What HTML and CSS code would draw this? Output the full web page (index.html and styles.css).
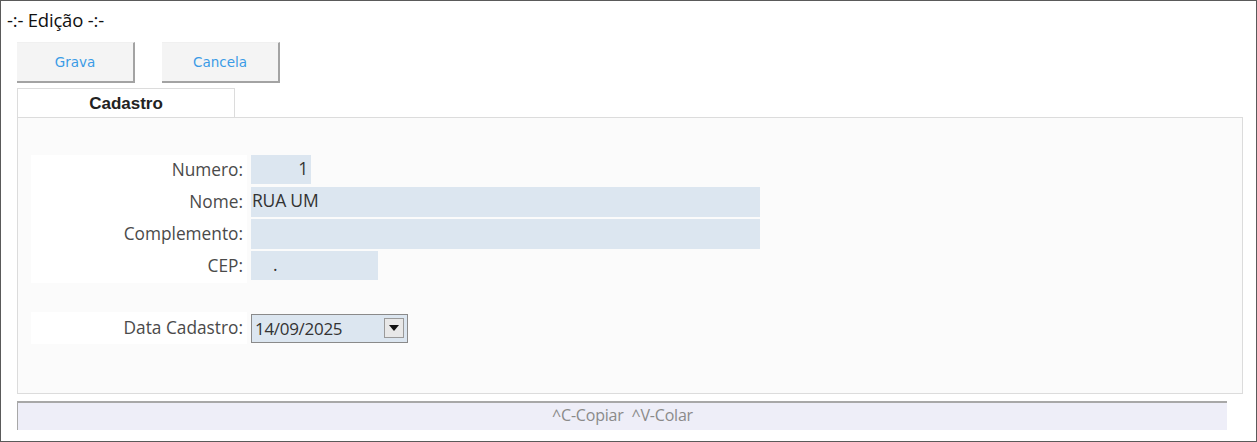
FILE: index.html
```html
<!DOCTYPE html>
<html lang="pt">
<head>
<meta charset="utf-8">
<title>Edição</title>
<link rel="stylesheet" href="styles.css">
</head>
<body>
<div class="window">
  <div class="title">-:- Edição -:-</div>
  <div class="toolbar">
    <button class="btn">Grava</button>
    <button class="btn">Cancela</button>
  </div>
  <div class="tabs">
    <div class="tab">Cadastro</div>
  </div>
  <div class="panel">
    <div class="row">
      <div class="label">Numero:</div>
      <div class="field f-num">1</div>
    </div>
    <div class="row">
      <div class="label">Nome:</div>
      <div class="field f-wide">RUA UM</div>
    </div>
    <div class="row">
      <div class="label">Complemento:</div>
      <div class="field f-wide"></div>
    </div>
    <div class="row">
      <div class="label">CEP:</div>
      <div class="field f-cep">.</div>
    </div>
    <div class="row row-date">
      <div class="label">Data Cadastro:</div>
      <div class="date">
        <span class="date-val">14/09/2025</span>
        <span class="date-btn"><svg width="10" height="6" viewBox="0 0 10 6"><path d="M0 0 H10 L5 6 Z" fill="#111"/></svg></span>
      </div>
    </div>
  </div>
  <div class="status">^C-Copiar &nbsp;^V-Colar</div>
</div>
</body>
</html>
```

FILE: styles.css
```css
html, body {
  margin: 0;
  padding: 0;
  background: #ffffff;
}
.window {
  width: 1257px;
  height: 442px;
  box-sizing: border-box;
  border: 1px solid #5a5a5a;
  background: #ffffff;
  font-family: "Open Sans", "Noto Sans", sans-serif;
}
.title {
  height: 41px;
  padding: 8px 0 0 6px;
  box-sizing: border-box;
  font-size: 18.5px;
  line-height: 22px;
  color: #111;
  letter-spacing: -0.2px;
}
.toolbar {
  display: flex;
  gap: 27px;
  margin-left: 16px;
  height: 41px;
}
.btn {
  width: 118px;
  height: 41px;
  box-sizing: border-box;
  background: #f4f4f4;
  border: none;
  border-right: 2px solid #a3a3a3;
  border-bottom: 2px solid #a3a3a3;
  border-top: 1px solid #f0f0f0;
  font-family: "DejaVu Sans", Verdana, sans-serif;
  font-size: 13.5px;
  color: #3a9be6;
  padding: 0;
}
.tabs {
  margin: 5px 0 0 16px;
  display: flex;
}
.tab {
  width: 218px;
  height: 29px;
  box-sizing: border-box;
  border: 1px solid #dcdcdc;
  border-bottom: none;
  background: #ffffff;
  font-family: "Liberation Sans", Arial, sans-serif;
  font-weight: bold;
  font-size: 17px;
  color: #222;
  text-align: center;
  line-height: 30px;
}
.panel {
  margin-left: 16px;
  width: 1226px;
  height: 277px;
  box-sizing: border-box;
  border: 1px solid #dcdcdc;
  background: #fbfbfb;
  padding-top: 37px;
  display: flex;
  flex-direction: column;
}
.row {
  display: flex;
  align-items: flex-start;
  height: 32px;
}
.row-date {
  margin-top: 29px;
  height: 32px;
  align-items: center;
}
.label {
  margin-left: 13px;
  width: 216px;
  height: 100%;
  box-sizing: border-box;
  background: #ffffff;
  text-align: right;
  padding-right: 4px;
  font-size: 17.3px;
  color: #4a4a4a;
  line-height: 29px;
}
.row-date .label {
  line-height: 32px;
}
.field {
  margin-left: 4px;
  height: 30px;
  background: #dce6f0;
  font-size: 17.5px;
  color: #333;
  line-height: 26px;
  padding: 0 1px;
  box-sizing: border-box;
  letter-spacing: -0.2px;
}
.f-num {
  width: 60px;
  text-align: right;
  padding-right: 3px;
  height: 29px;
}
.f-wide {
  width: 509px;
}
.f-cep {
  width: 127px;
  padding-left: 22px;
  height: 29px;
}
.date {
  margin-left: 4px;
  width: 157px;
  height: 29px;
  box-sizing: border-box;
  border: 1px solid #8a8a8a;
  background: #dce6f0;
  display: flex;
  align-items: center;
  justify-content: space-between;
  padding: 0 3px 0 3px;
}
.date-val {
  font-size: 17px;
  color: #333;
  letter-spacing: -0.3px;
}
.date-btn {
  width: 20px;
  height: 20px;
  box-sizing: border-box;
  background: #e8e8e8;
  border: 1px solid #9a9a9a;
  display: flex;
  align-items: center;
  justify-content: center;
}
.status {
  margin: 7px 0 0 16px;
  width: 1210px;
  height: 29px;
  box-sizing: border-box;
  background: #eeeef8;
  border-top: 2px solid #a8a8a8;
  border-left: 1px solid #a8a8a8;
  text-align: center;
  font-size: 16px;
  line-height: 25px;
  color: #8a8a8a;
  letter-spacing: -0.2px;
}
```
